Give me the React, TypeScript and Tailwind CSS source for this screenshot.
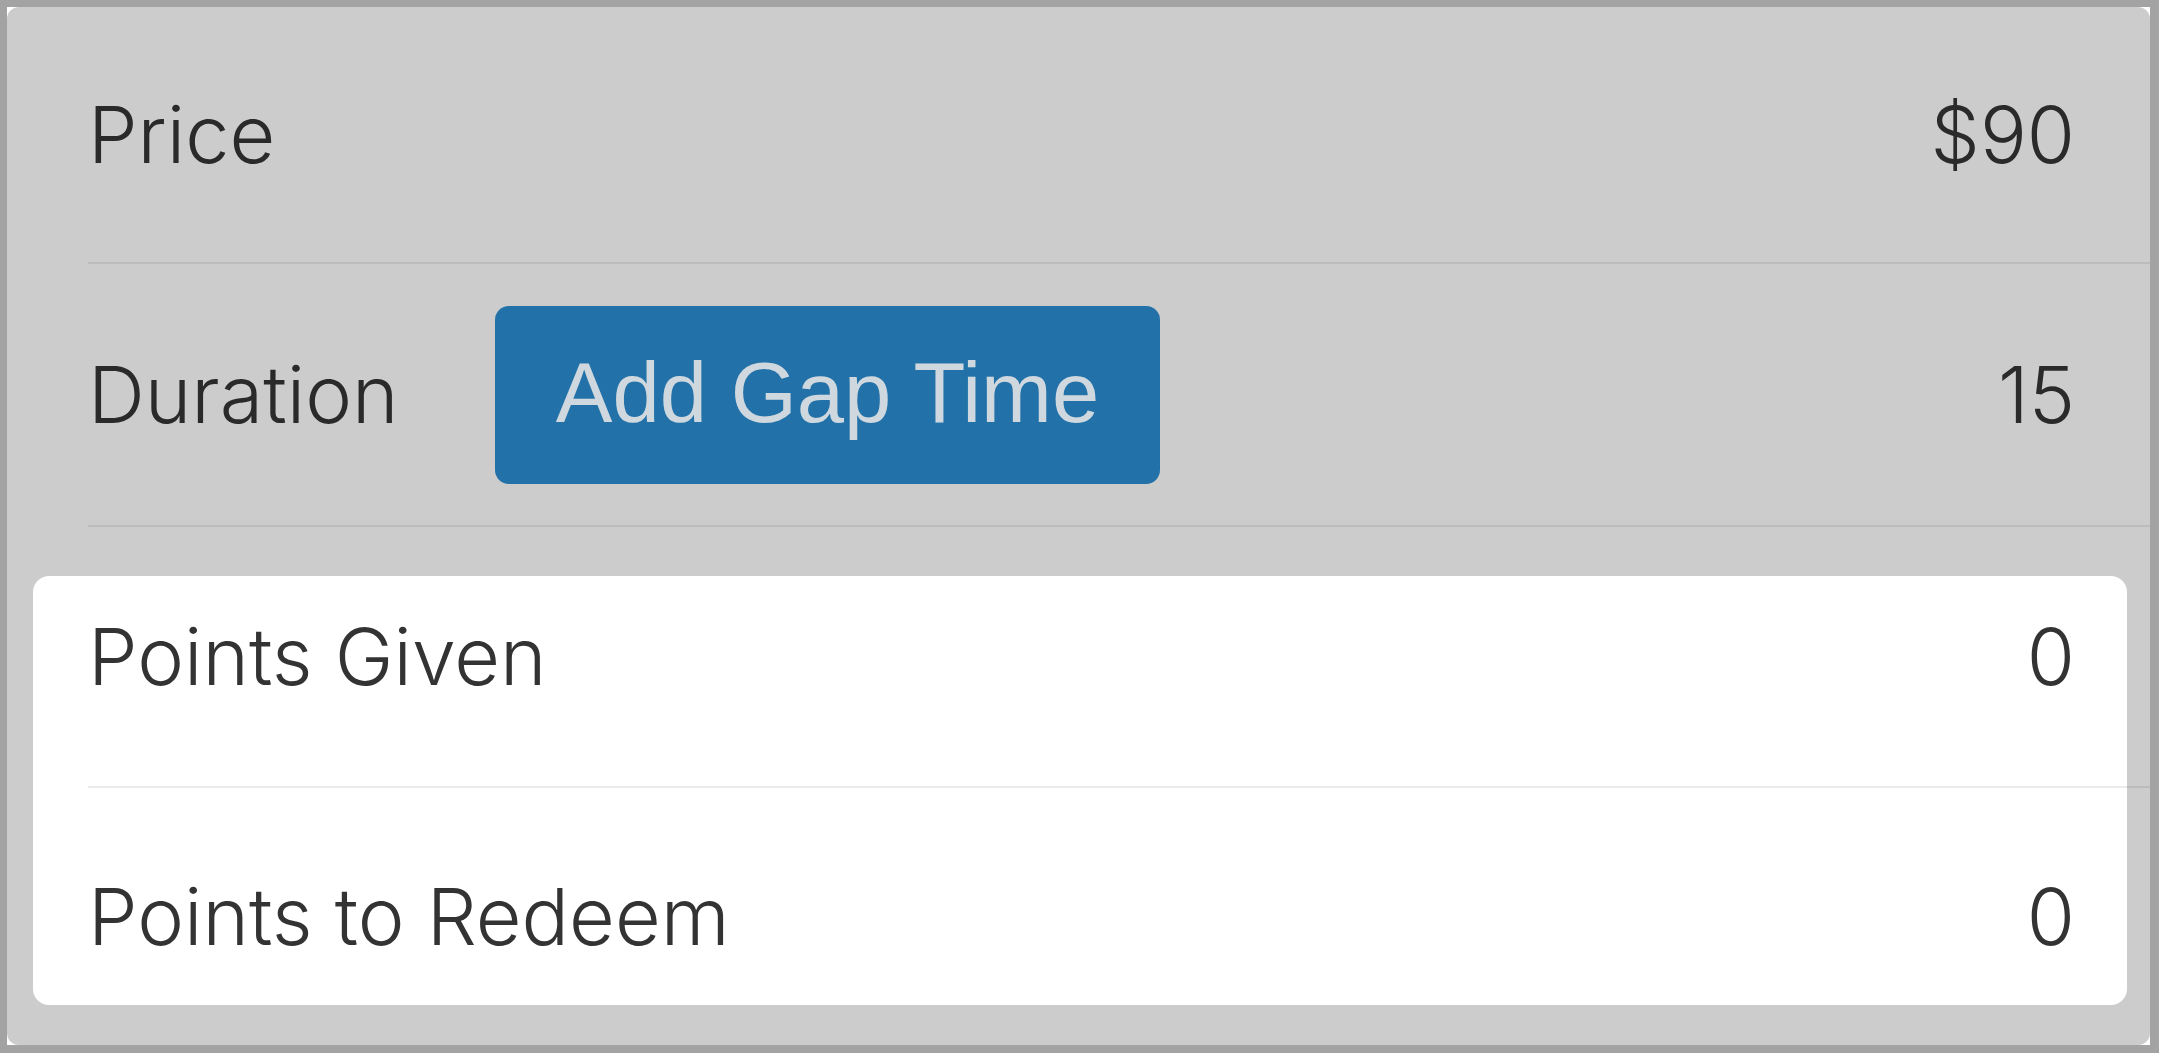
import React from "react";

const rows = [
  { label: "Price", value: "$90", h: "h-[257px]" },
  { label: "Duration", value: "15", button: "Add Gap Time", h: "h-[263px]" },
  { label: "Points Given", value: "0", lit: true, h: "h-[261px]" },
  { label: "Points to Redeem", value: "0", lit: true, h: "flex-1" },
];

function Row({ label, value, button, lit, last, h }: { label: string; value: string; button?: string; lit?: boolean; last?: boolean; h: string }) {
  return (
    <div className={`relative z-10 ml-[81px] flex items-center pr-[75px] ${h} ${last ? "" : "border-b-2 border-black/[0.08]"}`}>
      <div className={`w-[407px] shrink-0 whitespace-nowrap font-['Inter',sans-serif] text-[79px] font-light ${lit ? "text-[#333333]" : "text-[#2a2a2a]"}`}>{label}</div>
      {button && (
        <button className="flex h-[178px] w-[665px] items-center justify-center rounded-[14px] bg-[#2272a9] pb-[4px] font-['Liberation_Sans',sans-serif] text-[85px] text-[#cfd8de]">{button}</button>
      )}
      <div className={`ml-auto font-['Inter',sans-serif] text-[78px] font-light ${lit ? "text-[#333333]" : "text-[#2a2a2a]"}`}>{value}</div>
    </div>
  );
}

export default function App() {
  return (
    <div className="h-[1053px] w-[2159px] bg-[#a3a3a3] pb-[8px] pl-[7px] pr-[9px] pt-[7px]">
      <div className="h-full w-full bg-white">
        <div className="relative flex h-full flex-col overflow-hidden rounded-[12px] bg-[#cccccc]">
          {/* spotlight over the points rows */}
          <div className="absolute left-[26px] right-[23px] top-[569px] h-[429px] rounded-[16px] bg-white" />
          {rows.map((r, i) => (
            <Row key={r.label} {...r} last={i === rows.length - 1} />
          ))}
        </div>
      </div>
    </div>
  );
}
